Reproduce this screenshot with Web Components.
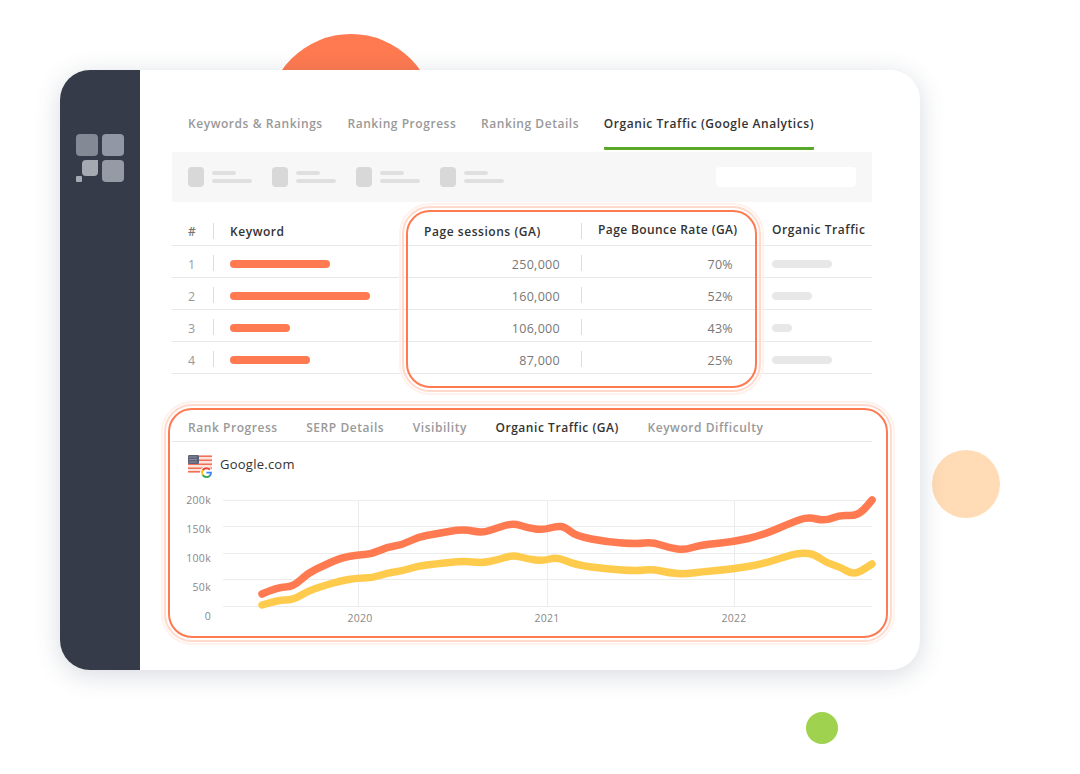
<!DOCTYPE html>
<html>
<head>
<meta charset="utf-8">
<style>
  html, body { margin: 0; background: #fff; }
  body { width: 1080px; height: 774px; overflow: hidden; font-family: "Open Sans", "Liberation Sans", sans-serif; }
</style>
</head>
<body>
<promo-stage>
  <promo-card>
    <tab-strip class="top" items="Keywords &amp; Rankings|Ranking Progress|Ranking Details|Organic Traffic (Google Analytics)" active="3"></tab-strip>
    <filter-bar></filter-bar>
    <keyword-table></keyword-table>
    <detail-panel></detail-panel>
  </promo-card>
</promo-stage>

<script>
const FONT = '"Open Sans", "Liberation Sans", sans-serif';

class PromoStage extends HTMLElement {
  constructor() {
    super();
    this.attachShadow({ mode: 'open' });
    this.shadowRoot.innerHTML = `
      <style>
        :host { display: block; position: relative; width: 1080px; height: 774px; padding: 70px 160px 0 60px; box-sizing: border-box; }
        .dot { position: absolute; border-radius: 50%; }
        .orange { left: 267px; top: 34px; width: 168px; height: 168px; background: #ff7a50; }
        .peach { left: 932px; top: 450px; width: 68px; height: 68px; background: #ffdcb6; }
        .green { left: 806px; top: 712px; width: 32px; height: 32px; background: #9ed24f; }
        ::slotted(*) { position: relative; }
      </style>
      <div class="dot orange"></div>
      <div class="dot peach"></div>
      <div class="dot green"></div>
      <slot></slot>
    `;
  }
}

class PromoCard extends HTMLElement {
  constructor() {
    super();
    this.attachShadow({ mode: 'open' });
    this.shadowRoot.innerHTML = `
      <style>
        :host {
          display: flex;
          height: 600px;
          border-radius: 30px;
          background: #fff;
          box-shadow: 0 5px 26px rgba(55,70,95,.2);
        }
        .wrap { display: flex; width: 100%; border-radius: 30px; overflow: hidden; }
        aside { width: 80px; flex: none; background: #353b48; padding-top: 64px; box-sizing: border-box; }
        svg { display: block; margin-left: 16px; }
        main { flex: 1; min-width: 0; padding: 32px 48px 0 32px; }
      </style>
      <div class="wrap">
        <aside>
          <svg width="48" height="48" viewBox="0 0 48 48">
            <rect x="0" y="0" width="22" height="22" rx="4" fill="#838a96"/>
            <rect x="26" y="0" width="22" height="22" rx="4" fill="#8f98a4"/>
            <path d="M10 26h12v12a4 4 0 0 1-4 4H10a4 4 0 0 1-4-4V30a4 4 0 0 1 4-4z" fill="#a5a9b1"/>
            <rect x="26" y="26" width="22" height="22" rx="4" fill="#959aa5"/>
            <rect x="0" y="42" width="6" height="6" rx="1" fill="#a5a9b1"/>
          </svg>
        </aside>
        <main><slot></slot></main>
      </div>
    `;
  }
}

class TabStrip extends HTMLElement {
  constructor() {
    super();
    this.attachShadow({ mode: 'open' });
  }

  connectedCallback() {
    const items = this.getAttribute('items').split('|');
    const active = parseInt(this.getAttribute('active'));
    const small = this.hasAttribute('small');
    const tabs = items.map((t, i) => `<div class="tab ${i === active ? 'on' : ''}">${t.replace('&', '&amp;')}</div>`).join('');
    this.shadowRoot.innerHTML = `
      <style>
        :host { display: block; }
        .row {
          display: flex;
          gap: ${small ? '28.5px' : '24.7px'};
          padding-left: 16px;
          height: ${small ? '27px' : '48px'};
          ${small ? 'padding-top: 4px; border-bottom: 1px solid #e8e8e8; align-items: center;' : ''}
        }
        .tab {
          font: 600 12px ${FONT};
          letter-spacing: .55px;
          color: #999;
          white-space: nowrap;
          ${small ? '' : 'height: 45px; line-height: 44px; border-bottom: 3px solid transparent; border-radius: 1px;'}
        }
        .tab.on { color: #333; ${small ? '' : 'border-bottom-color: #5aa82a;'} }
      </style>
      <div class="row">${tabs}</div>
    `;
  }
}

class FilterBar extends HTMLElement {
  constructor() {
    super();
    this.attachShadow({ mode: 'open' });
    const item = `<div class="item"><i></i><div class="lines"><b></b><b></b></div></div>`;
    this.shadowRoot.innerHTML = `
      <style>
        :host { display: flex; align-items: center; height: 50px; margin-top: 2px; padding: 0 16px; background: #f7f7f7; }
        .item { display: flex; gap: 8px; width: 84px; }
        i { display: block; width: 16px; height: 20px; border-radius: 4px; background: #d8d8d8; }
        .lines { display: flex; flex-direction: column; gap: 4px; padding-top: 4px; }
        b { display: block; width: 40px; height: 4px; border-radius: 2px; background: #e0e0e0; }
        b:first-child { width: 24px; }
        .search { margin-left: auto; width: 140px; height: 20px; border-radius: 4px; background: #fff; }
      </style>
      ${item.repeat(4)}
      <div class="search"></div>
    `;
  }
}

// orange highlight with the two pale rings, laid over whatever it frames
class FocusRing extends HTMLElement {
  constructor() {
    super();
    this.attachShadow({ mode: 'open' });
    this.shadowRoot.innerHTML = `
      <style>
        :host {
          display: block;
          position: absolute;
          box-sizing: border-box;
          border: 2px solid #ff7a50;
          border-radius: 24px;
          pointer-events: none;
        }
        div { position: absolute; box-sizing: border-box; }
        .near { inset: -6px; border: 2px solid #ffd9cc; border-radius: 28px; }
        .far { inset: -9px; border: 2px solid #fff1ec; border-radius: 31px; }
      </style>
      <div class="near"></div>
      <div class="far"></div>
    `;
  }
}

class KeywordTable extends HTMLElement {
  constructor() {
    super();
    this.attachShadow({ mode: 'open' });
    this.rows = [
      { key: 100, sessions: '250,000', bounce: '70%', traffic: 60 },
      { key: 140, sessions: '160,000', bounce: '52%', traffic: 40 },
      { key: 60, sessions: '106,000', bounce: '43%', traffic: 20 },
      { key: 80, sessions: '87,000', bounce: '25%', traffic: 60 },
    ];
    const body = this.rows.map((r, i) => `
      <div class="row">
        <div class="c num">${i + 1}</div>
        <div class="c sep"><span class="bar" style="width:${r.key}px"></span></div>
        <div class="c val">${r.sessions}</div>
        <div class="c val sep two">${r.bounce}</div>
        <div class="c"><span class="pill" style="width:${r.traffic}px"></span></div>
      </div>`).join('');
    this.shadowRoot.innerHTML = `
      <style>
        :host { display: block; position: relative; margin-top: 12px; }
        .row {
          display: grid;
          grid-template-columns: 41px 194px 174px 174px 1fr;
          height: 32px;
          box-sizing: border-box;
          border-bottom: 1px solid #e8e8e8;
          font: 400 12.5px ${FONT};
          letter-spacing: .3px;
          color: #777;
        }
        .c { position: relative; display: flex; align-items: center; padding-top: 5px; box-sizing: border-box; }
        .num { padding-left: 16px; color: #999; }
        .sep::before {
          content: '';
          position: absolute;
          left: 0;
          top: 9px;
          height: 16px;
          width: 1px;
          background: #ddd;
        }
        .c:nth-child(2) { padding-left: 17px; }
        .val { justify-content: flex-end; padding-right: 21px; }
        .two { padding-right: 22px; }
        .c:last-child { padding-left: 17px; }
        .bar { height: 8px; border-radius: 4px; background: #ff7a50; }
        .pill { height: 8px; border-radius: 4px; background: #e8e8e8; }
        .head { font-weight: 600; font-size: 12px; letter-spacing: .55px; color: #333; }
        .head .c { padding-top: 4px; }
        .head .num { color: #777; }
        .head .c.up { padding-top: 0; }
        .head .th { padding-left: 17px; }
        .head .c.th2 { justify-content: flex-start; padding-left: 17px; padding-right: 0; letter-spacing: .4px; }
        focus-ring { left: 234px; top: -4px; width: 351px; height: 178px; }
      </style>
      <div class="row head">
        <div class="c num">#</div>
        <div class="c sep"><span>Keyword</span></div>
        <div class="c th"><span>Page sessions (GA)</span></div>
        <div class="c sep th2 up"><span>Page Bounce Rate (GA)</span></div>
        <div class="c up"><span>Organic Traffic</span></div>
      </div>
      ${body}
      <focus-ring></focus-ring>
    `;
  }
}

class DetailPanel extends HTMLElement {
  constructor() {
    super();
    this.attachShadow({ mode: 'open' });
    this.shadowRoot.innerHTML = `
      <style>
        :host {
          display: block;
          position: relative;
          height: 230px;
          box-sizing: border-box;
          margin: 34px -16px 0 -4px;
          padding: 2px 16px 0 4px;
        }
        focus-ring { inset: 0; }
        .src { display: flex; align-items: flex-start; gap: 8px; height: 48px; padding: 12px 0 0 16px; box-sizing: border-box; }
        .src span { font: 400 13px/20px ${FONT}; letter-spacing: .25px; color: #333; }
        svg { display: block; }
        .src svg { margin-top: 1px; }
      </style>
      <tab-strip small items="Rank Progress|SERP Details|Visibility|Organic Traffic (GA)|Keyword Difficulty" active="3"></tab-strip>
      <div class="src">
        <svg width="24" height="24" viewBox="0 0 24 24">
          <rect x="0" y="0" width="24" height="18" rx="2.5" fill="#fbe3da"/>
          <path d="M0 1.2h24M0 5.2h24M0 9.2h24M0 13.2h24M0 16.8h24" stroke="#f0705a" stroke-width="1.6"/>
          <rect x="0" y="0" width="11" height="9" rx="1.5" fill="#596078"/>
          <path d="M1.5 2h8M1.5 4.5h8M1.5 7h8" stroke="#c9ccd6" stroke-width=".9" stroke-dasharray="1 1"/>
          <circle cx="18.2" cy="17.6" r="6.2" fill="#fff"/>
          <path d="M22 14.7a4.9 4.9 0 0 0-7.3 0.4" fill="none" stroke="#ea4335" stroke-width="1.9"/>
          <path d="M14.7 15.1a4.9 4.9 0 0 0 0 5" fill="none" stroke="#fbbc05" stroke-width="1.9"/>
          <path d="M14.7 20.1a4.9 4.9 0 0 0 6.9 1" fill="none" stroke="#34a853" stroke-width="1.9"/>
          <path d="M21.6 21.1a4.9 4.9 0 0 0 1.4-3.5h-4.6" fill="none" stroke="#4285f4" stroke-width="1.9"/>
        </svg>
        <span>Google.com</span>
      </div>
      <traffic-chart></traffic-chart>
      <focus-ring></focus-ring>
    `;
  }
}

class TrafficChart extends HTMLElement {
  constructor() {
    super();
    this.attachShadow({ mode: 'open' });
    this.orange = [[262,594],[278,587],[293,587],[308,573],[323,566],[340,558],[357,555],[372,554],[387,547],[402,545],[418,537],[435,534],[463,529],[482,533],[497,528],[513,523],[528,528],[543,530],[557,526],[565,527],[576,536],[607,542],[637,544],[652,542],[670,548],[685,550],[700,545],[733,542],[763,535],[793,522],[808,517],[825,521],[840,515],[853,516],[862,512],[872,500]];
    this.yellow = [[262,605],[278,600],[293,600],[308,591],[323,586],[340,581],[357,578],[372,578],[387,573],[402,571],[418,566],[435,564],[463,561],[482,563],[497,560],[513,555],[528,559],[543,561],[557,557],[576,565],[607,569],[637,571],[652,569],[670,573],[685,574],[700,572],[733,569],[763,564],[793,554],[807,553],[815,555],[827,563],[840,567],[850,573],[858,573],[872,564]];
  }

  // midpoint smoothing so the joints don't look faceted
  smooth(pts) {
    let d = `M${pts[0][0]} ${pts[0][1]}`;
    for (let i = 1; i < pts.length - 1; i++) {
      const mx = (pts[i][0] + pts[i + 1][0]) / 2;
      const my = (pts[i][1] + pts[i + 1][1]) / 2;
      d += ` Q${pts[i][0]} ${pts[i][1]} ${mx} ${my}`;
    }
    const last = pts[pts.length - 1];
    return d + ` L${last[0]} ${last[1]}`;
  }

  connectedCallback() {
    const grid = [500, 526, 553, 579, 606].map(y => `<line x1="223" x2="872" y1="${y}.5" y2="${y}.5"/>`).join('');
    const vert = [358, 547, 734].map(x => `<line x1="${x}.5" x2="${x}.5" y1="500" y2="606"/>`).join('');
    const yLabels = [['200k', 500], ['150k', 529], ['100k', 558], ['50k', 587], ['0', 616]]
      .map(([t, y]) => `<text x="211" y="${y + 4}" text-anchor="end">${t}</text>`).join('');
    const xLabels = [['2020', 360], ['2021', 547], ['2022', 734]]
      .map(([t, x]) => `<text x="${x}" y="622" text-anchor="middle">${t}</text>`).join('');
    this.shadowRoot.innerHTML = `
      <style>
        :host { display: block; }
        svg { display: block; overflow: visible; }
        .grid line { stroke: #ececec; stroke-width: 1; }
        text { font: 400 10.5px ${FONT}; letter-spacing: .3px; fill: #888; }
        path { fill: none; stroke-width: 7.5; stroke-linecap: round; stroke-linejoin: round; }
      </style>
      <svg width="700" height="140" viewBox="172 490 700 140">
        <g class="grid">${grid}${vert}</g>
        ${yLabels}${xLabels}
        <path d="${this.smooth(this.orange)}" stroke="#ff7a50"/>
        <path d="${this.smooth(this.yellow)}" stroke="#ffcb4d"/>
      </svg>
    `;
  }
}

customElements.define('promo-stage', PromoStage);
customElements.define('promo-card', PromoCard);
customElements.define('tab-strip', TabStrip);
customElements.define('filter-bar', FilterBar);
customElements.define('focus-ring', FocusRing);
customElements.define('keyword-table', KeywordTable);
customElements.define('detail-panel', DetailPanel);
customElements.define('traffic-chart', TrafficChart);
</script>
</body>
</html>
